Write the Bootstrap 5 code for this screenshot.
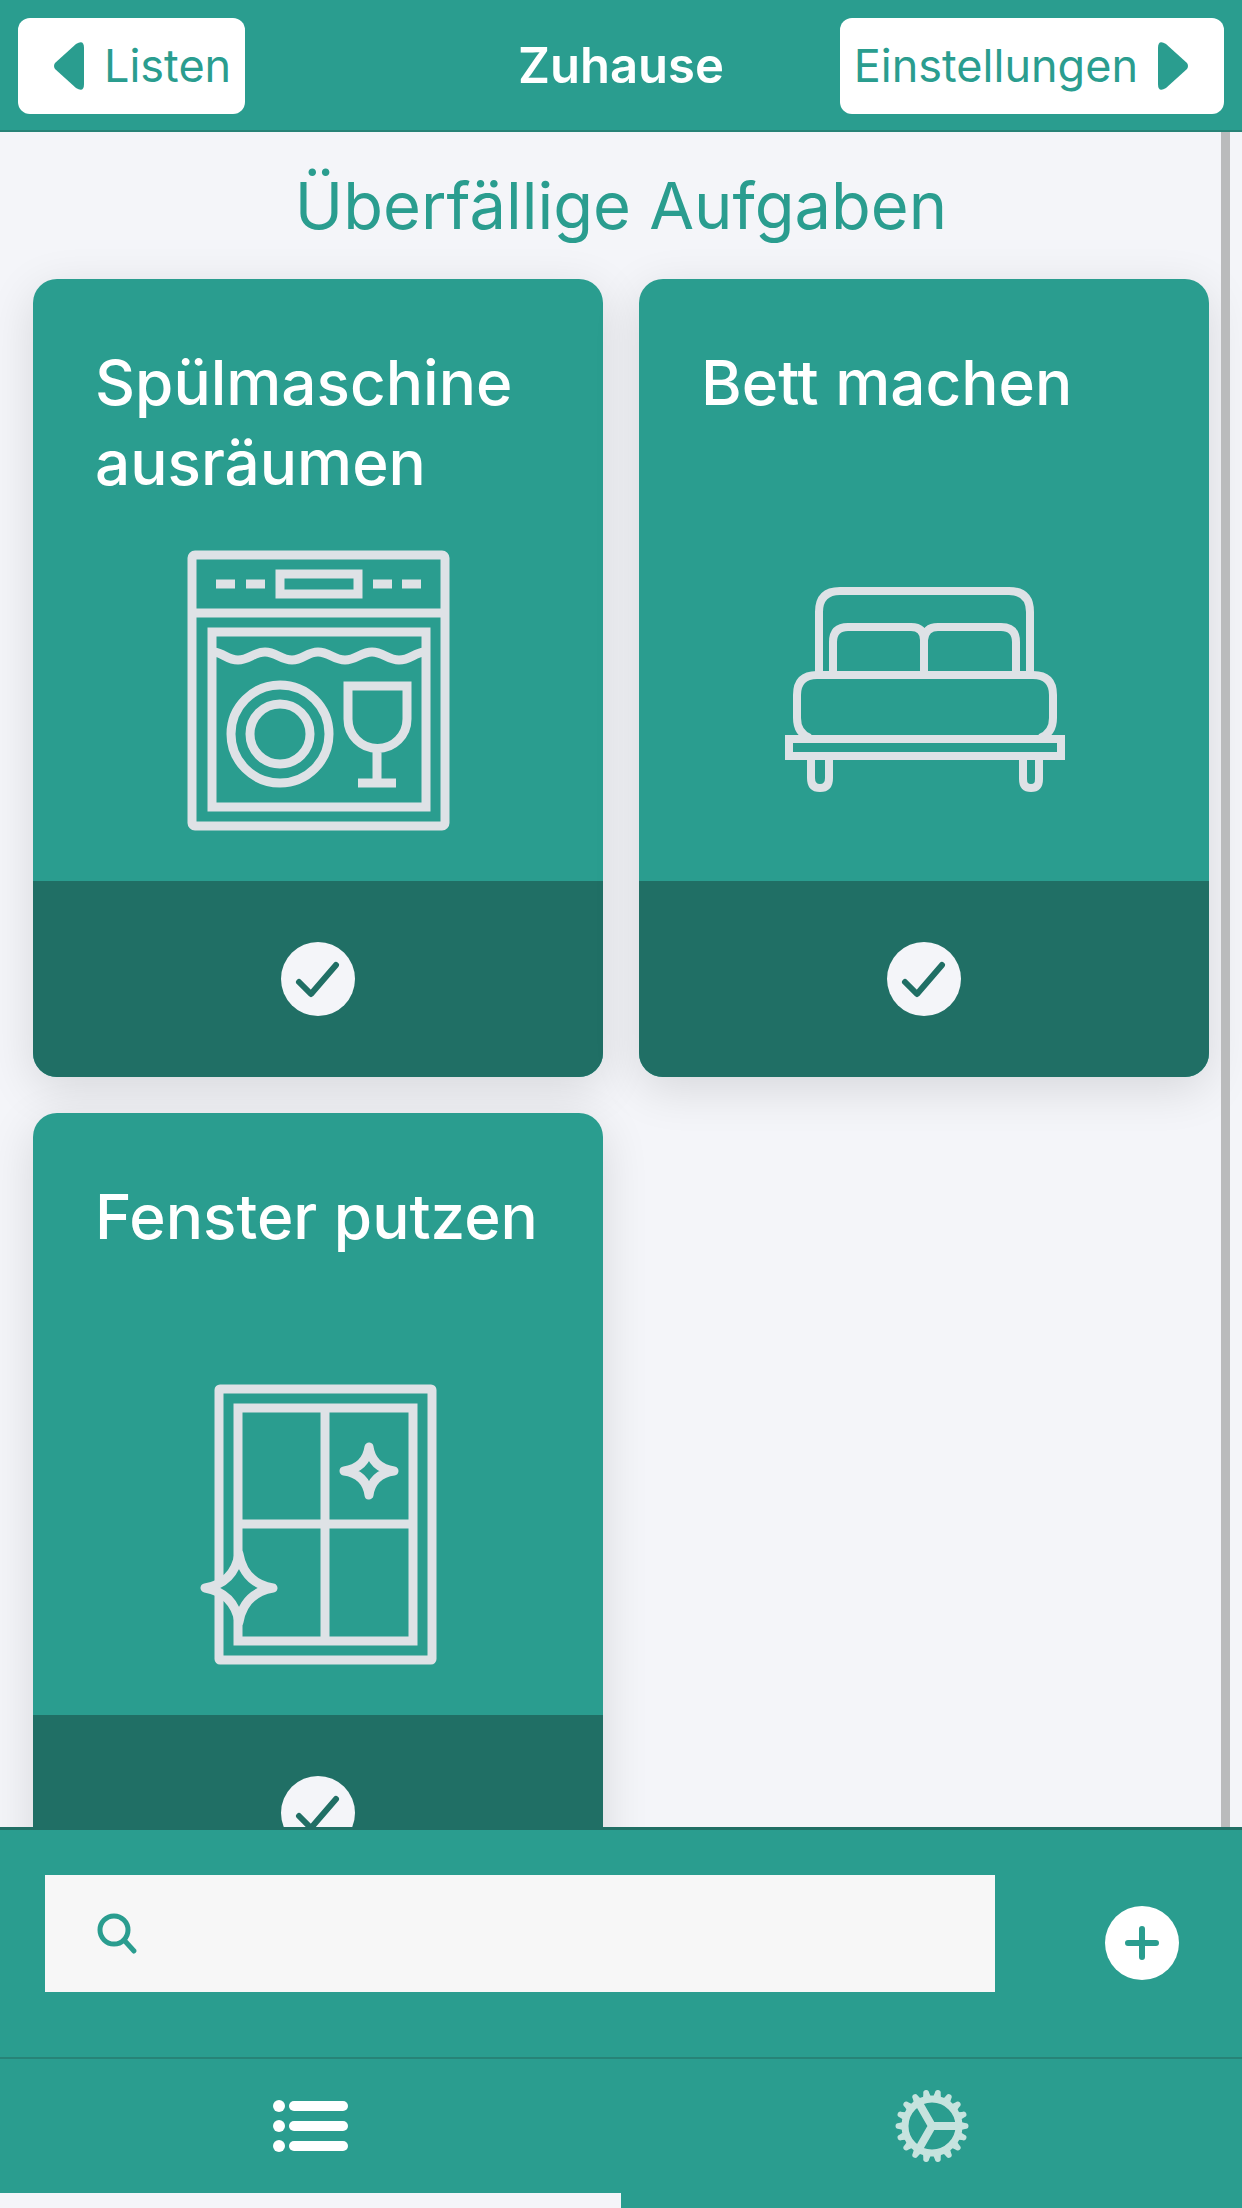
<!DOCTYPE html>
<html lang="de">
<head>
<meta charset="utf-8">
<meta name="viewport" content="width=device-width, initial-scale=1">
<title>Zuhause</title>
<link href="https://cdn.jsdelivr.net/npm/bootstrap@5.3.0/dist/css/bootstrap.min.css" rel="stylesheet">
<style>
:root { --teal: #2a9d8f; --teal-dark: #206f65; --paper: #f4f5f9; }
body { font-family: Inter, Roboto, "Liberation Sans", sans-serif; background: var(--paper); }
.top-bar { display: grid; grid-template-columns: 1fr auto 1fr; padding: 18px 18px 16px; background: var(--teal); border-bottom: 2px solid #278377; }
.top-bar h1 { font-size: 49px; line-height: 60px; font-weight: 600; }
.nav-btn { height: 96px; font-size: 45px; line-height: 60px; color: var(--teal); background: #fff; border-radius: 12px; border: 0; gap: 20px; }
.nav-btn:hover { background: #fff; color: var(--teal-dark); }
.nav-back { padding: 0 14px 0 36px; }
.nav-next { padding: 0 36px 0 14px; }
.section-title { font-size: 65px; line-height: 87px; font-weight: 400; color: var(--teal); padding: 30px 0; }
.task-grid { display: grid; grid-template-columns: 1fr 1fr; gap: 36px; padding: 0 33px 36px; }
.task { border: 0; border-radius: 24px; overflow: hidden; background: var(--teal); box-shadow: 0 12px 48px rgba(0,0,0,.12); }
.task .card-body { padding: 64px 48px 46px; }
.task h3 { font-size: 62px; line-height: 80px; min-height: 160px; margin: 0 0 44px; padding-left: 14px; font-weight: 500; color: #fff; }
.task svg.pic { width: 288px; height: 288px; fill: none; stroke: #dee2e6; stroke-width: 9; }
.task .card-footer { height: 196px; background: var(--teal-dark); border: 0; }
.round-btn { width: 74px; height: 74px; }
.scroll-thumb { width: 9px; background: #babbbc; right: 12px; top: 0; bottom: 0; }
.search-bar { border-top: 3px solid var(--teal-dark); background: var(--teal); padding: 45px 63px 65px 45px; gap: 110px; }
.search-box { height: 117px; background: #f7f7f7; padding-left: 48px; gap: 24px; }
.search-box input { font-size: 45px; color: var(--teal); }
.add-btn { margin-top: 31px; }
.tab-bar { background: var(--teal); border-top: 2px solid #278377; }
.tab-bar a { height: 149px; border-bottom: 15px solid transparent; }
.tab-bar a.active { border-color: var(--paper); }
</style>
<script src="https://cdn.jsdelivr.net/npm/bootstrap@5.3.0/dist/js/bootstrap.bundle.min.js"></script>
</head>
<body class="vh-100 d-flex flex-column overflow-hidden">

<header class="top-bar align-items-center">
  <button type="button" class="btn nav-btn nav-back d-flex align-items-center me-auto">
    <svg width="30" height="48" viewBox="0 0 30 48" fill="currentColor" aria-hidden="true"><path d="M1 21 22 2Q30-3 30 6V42Q30 51 22 46L1 27Q-1 24 1 21Z"/></svg>
    Listen
  </button>
  <h1 class="m-0 text-white">Zuhause</h1>
  <button type="button" class="btn nav-btn nav-next d-flex align-items-center ms-auto">
    Einstellungen
    <svg width="30" height="48" viewBox="0 0 30 48" fill="currentColor" aria-hidden="true"><path d="M29 21 8 2Q0-3 0 6V42Q0 51 8 46L29 27Q31 24 29 21Z"/></svg>
  </button>
</header>

<main class="flex-grow-1 position-relative overflow-hidden">
  <h2 class="section-title m-0 text-center">Überfällige Aufgaben</h2>
  <div class="task-grid">

    <article class="card task">
      <div class="card-body">
        <h3>Spülmaschine ausräumen</h3>
        <svg class="pic d-block mx-auto" viewBox="0 0 288 288" aria-hidden="true">
          <rect x="18" y="8" width="253" height="271" rx="3"/>
          <path d="M18 66H271M42 37H61M72 37H91M199 37H218M228 37H247"/>
          <rect x="106" y="27" width="78" height="20"/>
          <rect x="38" y="85" width="214" height="175"/>
          <path d="M40 105C50 106 53 113 64 113S80 105 91 105 107 113 118 113 133 105 144 105 160 113 171 113 187 105 198 105 214 113 225 113 240 106 250 105"/>
          <circle cx="106" cy="187" r="49"/><circle cx="106" cy="187" r="30"/>
          <path d="M174 139H233V172A29 29 0 0 1 174 172ZM203 201V236M184 236H222"/>
        </svg>
      </div>
      <div class="card-footer d-flex align-items-center justify-content-center p-0">
        <button type="button" class="btn p-0 border-0 round-btn d-flex" aria-label="Erledigt">
          <svg width="74" height="74" viewBox="0 0 74 74" aria-hidden="true"><circle cx="37" cy="37" r="37" fill="#f4f5f9"/><path d="M18 40 30 52 55 23" fill="none" stroke="#206f65" stroke-width="6" stroke-linecap="round" stroke-linejoin="round"/></svg>
        </button>
      </div>
    </article>

    <article class="card task">
      <div class="card-body">
        <h3>Bett machen</h3>
        <svg class="pic d-block mx-auto" viewBox="0 0 288 288" aria-hidden="true">
          <g stroke-width="8">
            <path d="M39 128V65Q39 44 60 44H229Q250 44 250 65V128"/>
            <path d="M53 128V95Q53 80 68 80H131Q144 80 144 93V128M144 93Q145 80 158 80H221Q236 80 236 95V128"/>
            <path d="M30 191Q17 186 17 171V148Q17 128 37 128H253Q273 128 273 148V171Q273 186 260 191"/>
            <rect x="9" y="192" width="272" height="17"/>
            <path d="M31 209V231Q31 241 40 241T49 231V209M243 209V232Q243 241 251 241T259 232V209"/>
          </g>
        </svg>
      </div>
      <div class="card-footer d-flex align-items-center justify-content-center p-0">
        <button type="button" class="btn p-0 border-0 round-btn d-flex" aria-label="Erledigt">
          <svg width="74" height="74" viewBox="0 0 74 74" aria-hidden="true"><circle cx="37" cy="37" r="37" fill="#f4f5f9"/><path d="M18 40 30 52 55 23" fill="none" stroke="#206f65" stroke-width="6" stroke-linecap="round" stroke-linejoin="round"/></svg>
        </button>
      </div>
    </article>

    <article class="card task">
      <div class="card-body">
        <h3>Fenster putzen</h3>
        <svg class="pic d-block mx-auto" viewBox="0 0 288 288" aria-hidden="true">
          <rect x="45" y="8" width="213" height="271" rx="1"/>
          <rect x="64" y="27" width="175" height="233"/>
          <path d="M151 27V260M64 143H239"/>
          <g fill="#2a9d8f" stroke-linejoin="round" stroke-width="9">
            <path d="M195 66Q198 87 220 90Q198 93 195 114Q192 93 170 90Q192 87 195 66Z"/>
            <path d="M65 173Q70 202 99 207Q70 212 65 241Q60 212 31 207Q60 202 65 173Z"/>
          </g>
        </svg>
      </div>
      <div class="card-footer d-flex align-items-center justify-content-center p-0">
        <button type="button" class="btn p-0 border-0 round-btn d-flex" aria-label="Erledigt">
          <svg width="74" height="74" viewBox="0 0 74 74" aria-hidden="true"><circle cx="37" cy="37" r="37" fill="#f4f5f9"/><path d="M18 40 30 52 55 23" fill="none" stroke="#206f65" stroke-width="6" stroke-linecap="round" stroke-linejoin="round"/></svg>
        </button>
      </div>
    </article>

  </div>
  <div class="scroll-thumb position-absolute"></div>
</main>

<footer class="flex-shrink-0">
  <form class="search-bar d-flex align-items-start">
    <label class="search-box d-flex align-items-center flex-grow-1">
      <svg class="flex-shrink-0" width="46" height="46" viewBox="0 0 46 46" fill="none" stroke="#2a9d8f" stroke-width="5" stroke-linecap="round" aria-hidden="true"><circle cx="21" cy="19" r="14"/><path d="M31 29 41 40"/></svg>
      <input type="search" class="form-control border-0 bg-transparent shadow-none p-0" aria-label="Aufgabe suchen">
    </label>
    <button type="button" class="btn p-0 border-0 round-btn add-btn d-flex" aria-label="Aufgabe hinzufügen">
      <svg width="74" height="74" viewBox="0 0 74 74" aria-hidden="true"><circle cx="37" cy="37" r="37" fill="#fff"/><path d="M37 23V51M23 37H51" stroke="#2a9d8f" stroke-width="6" stroke-linecap="round"/></svg>
    </button>
  </form>
  <nav class="tab-bar d-flex">
    <a href="#listen" class="active w-50 d-flex align-items-center justify-content-center" aria-label="Listen" aria-current="page">
      <svg width="76" height="52" viewBox="0 0 76 52" fill="#fff" aria-hidden="true"><circle cx="6" cy="6" r="6"/><circle cx="6" cy="26" r="6"/><circle cx="6" cy="46" r="6"/><rect x="16" y="1" width="59" height="10" rx="5"/><rect x="16" y="21" width="59" height="10" rx="5"/><rect x="16" y="41" width="59" height="10" rx="5"/></svg>
    </a>
    <a href="#optionen" class="w-50 d-flex align-items-center justify-content-center" aria-label="Optionen">
      <svg width="76" height="76" viewBox="-38 -38 76 76" fill="none" stroke="#c6e3de" aria-hidden="true">
        <circle r="27" stroke-width="7"/>
        <path d="M0 0H27M0 0-13.500-23.400M0 0-13.500 23.400" stroke-width="8"/>
        <path id="teeth" d="M29 -4 33 -3Q36.500 -3 36.500 0T33 3L29 4ZM-29 -4-33 -3Q-36.500 -3-36.500 0T-33 3L-29 4Z" fill="#c6e3de" stroke="none"/>
        <use href="#teeth" transform="rotate(20)"/><use href="#teeth" transform="rotate(40)"/><use href="#teeth" transform="rotate(60)"/><use href="#teeth" transform="rotate(80)"/><use href="#teeth" transform="rotate(100)"/><use href="#teeth" transform="rotate(120)"/><use href="#teeth" transform="rotate(140)"/><use href="#teeth" transform="rotate(160)"/>
      </svg>
    </a>
  </nav>
</footer>
</body>
</html>
